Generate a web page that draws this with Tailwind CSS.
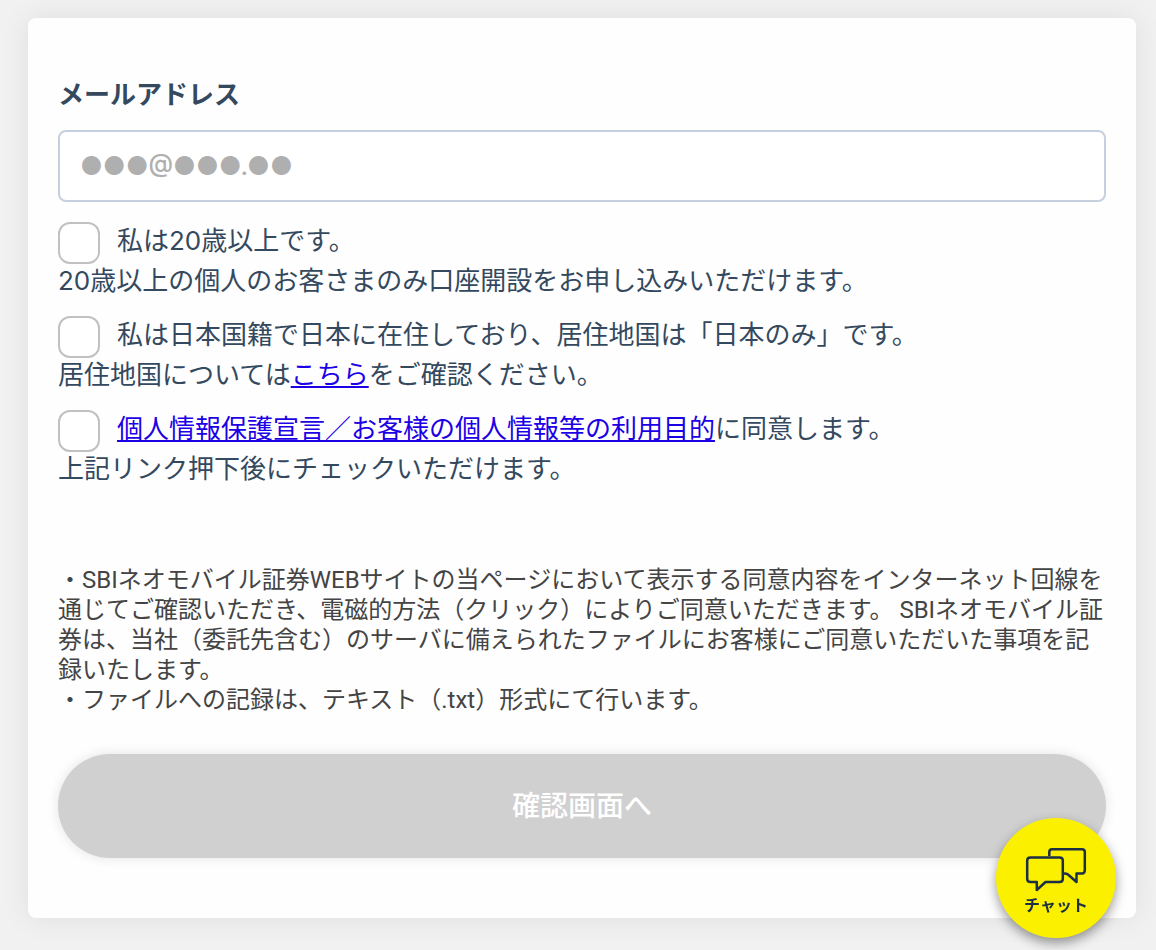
<!DOCTYPE html>
<html lang="ja">

<head>
    <meta charset="UTF-8">
    <meta name="viewport" content="width=device-width, initial-scale=1.0">
    <title>口座開設お申し込み</title>
    <script src="https://cdn.jsdelivr.net/npm/@tailwindcss/browser@4"></script>
</head>

<body class="min-h-screen bg-[#f1f1f1] pt-[18px] pr-5 pb-8 pl-7 font-['Inter','Noto_Sans_CJK_JP',sans-serif] text-[26px] leading-[40px] text-[#34495e]">
    <main class="rounded-lg bg-[#fefefe] px-[30px] pt-[57px] pb-[60px] shadow-[0_0_30px_rgba(0,0,0,0.08)]">
        <form>
            <label for="email" class="block font-bold">メールアドレス</label>
            <input type="email" id="email" placeholder="●●●@●●●.●●"
                class="mt-[15px] block h-[72px] w-full rounded-lg border-2 border-[#c5d0de] bg-white px-5 text-[25px] font-medium placeholder:text-[#afafaf]">

            <div class="mt-[19px] flex flex-col gap-[14px]">
                <div>
                    <div class="flex h-10 gap-[17px]">
                        <input type="checkbox" id="age"
                            class="mt-px size-[42px] shrink-0 appearance-none rounded-xl border-2 border-[#c1c1c1] bg-white checked:bg-[#34495e]">
                        <label for="age">私は20歳以上です。</label>
                    </div>
                    <p>20歳以上の個人のお客さまのみ口座開設をお申し込みいただけます。</p>
                </div>
                <div>
                    <div class="flex h-10 gap-[17px]">
                        <input type="checkbox" id="residence"
                            class="mt-px size-[42px] shrink-0 appearance-none rounded-xl border-2 border-[#c1c1c1] bg-white checked:bg-[#34495e]">
                        <label for="residence">私は日本国籍で日本に在住しており、居住地国は「日本のみ」です。</label>
                    </div>
                    <p>居住地国については<a href="#" class="text-[#1c00e6] underline">こちら</a>をご確認ください。</p>
                </div>
                <div>
                    <div class="flex h-10 gap-[17px]">
                        <input type="checkbox" id="privacy"
                            class="mt-px size-[42px] shrink-0 appearance-none rounded-xl border-2 border-[#c1c1c1] bg-white checked:bg-[#34495e]">
                        <label for="privacy"><a href="#" class="text-[#1c00e6] underline">個人情報保護宣言／お客様の個人情報等の利用目的</a>に同意します。</label>
                    </div>
                    <p>上記リンク押下後にチェックいただけます。</p>
                </div>
            </div>

            <div class="mt-[76px] -mr-[3px] font-['Roboto','Noto_Sans_CJK_JP',sans-serif] text-2xl leading-[30px] text-[#444444]">
                <p>・SBIネオモバイル証券WEBサイトの当ページにおいて表示する同意内容をインターネット回線を通じてご確認いただき、電磁的方法（クリック）によりご同意いただきます。 SBIネオモバイル証券は、当社（委託先含む）のサーバに備えられたファイルにお客様にご同意いただいた事項を記録いたします。</p>
                <p>・ファイルへの記録は、テキスト（.txt）形式にて行います。</p>
            </div>

            <button type="button"
                class="mt-[39px] block h-[104px] w-full rounded-full bg-[#d0d0d0] text-[28px] font-medium text-white shadow-[0_0_12px_rgba(0,30,20,0.12)]">確認画面へ</button>
        </form>
    </main>

    <button type="button"
        class="fixed right-10 bottom-3 flex size-[120px] flex-col items-center rounded-full bg-[#faf000] pt-[29px] text-[#1c2f45] shadow-[0_5px_12px_rgba(0,0,0,0.4)]">
        <svg class="h-[46px] w-[62px]" viewBox="0 0 62 46" fill="none" stroke="currentColor" stroke-width="2.5" stroke-linejoin="round" aria-hidden="true">
            <path d="M24.300 9V5Q24.300 2.200 27 2.200H57Q59.800 2.200 59.800 5V23Q59.800 26.500 57 26.500H51.500V35L43 27.500Q42 26.500 39 26.500" />
            <path d="M5.500 10.500H34.500Q37.800 10.500 37.800 13.500V32Q37.800 35 34.500 35H20.500L11.800 43V35H5.500Q2.200 35 2.200 32V13.500Q2.200 10.500 5.500 10.500Z" />
        </svg>
        <span class="text-base leading-6 font-bold">チャット</span>
    </button>
</body>

</html>
